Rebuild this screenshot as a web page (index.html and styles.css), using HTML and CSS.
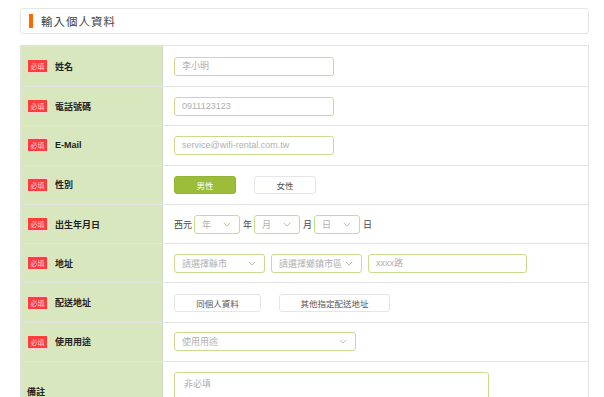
FILE: index.html
```html
<!DOCTYPE html>
<html lang="zh-Hant">
<head>
  <meta charset="UTF-8">
  <title>輸入個人資料</title>
  <link rel="stylesheet" href="styles.css">
</head>
<body>
<div class="page">
  <div class="title-box"><span class="title-mark"></span><h2>輸入個人資料</h2></div>

  <div class="form-table">
    <div class="row">
      <div class="label"><span class="must">必填</span>姓名</div>
      <div class="field"><input class="txt w160" placeholder="李小明"></div>
    </div>
    <div class="row">
      <div class="label"><span class="must">必填</span>電話號碼</div>
      <div class="field"><input class="txt w160" placeholder="0911123123"></div>
    </div>
    <div class="row">
      <div class="label"><span class="must">必填</span><b class="en">E-Mail</b></div>
      <div class="field"><input class="txt w160" placeholder="service@wifi-rental.com.tw"></div>
    </div>
    <div class="row">
      <div class="label"><span class="must">必填</span>性別</div>
      <div class="field">
        <span class="btn on">男性</span>
        <span class="btn gap18">女性</span>
      </div>
    </div>
    <div class="row">
      <div class="label"><span class="must">必填</span>出生年月日</div>
      <div class="field date">
        西元
        <span class="sel w46">年<svg viewBox="0 0 10 6"><path d="M1 1l4 4 4-4"/></svg></span>年
        <span class="sel w46">月<svg viewBox="0 0 10 6"><path d="M1 1l4 4 4-4"/></svg></span>月
        <span class="sel w46">日<svg viewBox="0 0 10 6"><path d="M1 1l4 4 4-4"/></svg></span>日
      </div>
    </div>
    <div class="row">
      <div class="label"><span class="must">必填</span>地址</div>
      <div class="field addr">
        <span class="sel w91">請選擇縣市<svg viewBox="0 0 10 6"><path d="M1 1l4 4 4-4"/></svg></span>
        <span class="sel w91">請選擇鄉鎮市區<svg viewBox="0 0 10 6"><path d="M1 1l4 4 4-4"/></svg></span>
        <input class="txt w159" placeholder="xxxx路">
      </div>
    </div>
    <div class="row">
      <div class="label"><span class="must">必填</span>配送地址</div>
      <div class="field">
        <span class="btn w86">同個人資料</span>
        <span class="btn w110 gap18">其他指定配送地址</span>
      </div>
    </div>
    <div class="row">
      <div class="label"><span class="must">必填</span>使用用途</div>
      <div class="field"><span class="sel w182">使用用途<svg viewBox="0 0 10 6"><path d="M1 1l4 4 4-4"/></svg></span></div>
    </div>
    <div class="row tall">
      <div class="label bottom">備註</div>
      <div class="field top"><textarea class="area" placeholder="非必填"></textarea></div>
    </div>
  </div>
</div>
</body>
</html>
```

FILE: styles.css
```css
body {
  margin: 0;
  background-color: #fff;
  font-family: "Liberation Sans", "Noto Sans CJK TC", sans-serif;
  font-size: 9px;
  color: #333;
  overflow: hidden;
}

.page {
  width: 569px;
  padding: 8px 0 0 20px;
}

.title-box {
  display: flex;
  align-items: center;
  height: 24px;
  border: 1px solid #e6e6e6;
  border-radius: 3px;
  padding-left: 8px;
}

.title-mark {
  width: 4px;
  height: 14px;
  background-color: #ff6a00;
  margin-right: 8px;
}

.title-box h2 {
  margin: 0;
  font-size: 11.5px;
  font-weight: normal;
  color: #444;
  letter-spacing: 1px;
}

.form-table {
  margin-top: 11px;
  border: 1px solid #e2e2e2;
  border-bottom: none;
}

.row {
  display: grid;
  grid-template-columns: 142px 1fr;
  height: 38.3px;
  border-bottom: 1px solid #e2e2e2;
}

.row:first-child {
  height: 40px;
}

.row.tall {
  height: 60px;
}

.label {
  display: flex;
  align-items: center;
  padding-left: 6px;
  background-color: #d9e7bf;
  border-right: 1px solid #d0d8c4;
  color: #222;
  font-weight: bold;
}

.label.bottom {
  align-items: flex-start;
  padding-top: 23px;
  padding-left: 6px;
}

.en {
  font-family: "Liberation Sans", sans-serif;
}

.must {
  display: inline-flex;
  align-items: center;
  justify-content: center;
  width: 19px;
  height: 12px;
  margin-right: 7px;
  background-color: #ff3b3b;
  border: 1px solid #fbd3d3;
  color: #ffd9d9;
  font-size: 7px;
  font-weight: normal;
}

.field {
  display: flex;
  align-items: center;
  padding-left: 11px;
  color: #444;
}

.field.top {
  align-items: flex-start;
  padding-top: 10px;
}

.txt {
  box-sizing: border-box;
  height: 19px;
  padding: 0 7px;
  border: 1px solid #c9db8f;
  border-radius: 3px;
  font-family: inherit;
  font-size: 9px;
  outline: none;
}

.txt::placeholder,
.area::placeholder {
  color: #b0b0b0;
}

.w160 {
  width: 160px;
}

.w159 {
  width: 159px;
}

.btn {
  box-sizing: border-box;
  display: inline-flex;
  align-items: center;
  justify-content: center;
  width: 62px;
  height: 18px;
  border: 1px solid #e4e4ea;
  border-radius: 3px;
  color: #555;
  font-size: 8.5px;
}

.btn.on {
  background-color: #9cbd3a;
  border-color: #93b333;
  color: #fff;
}

.btn.w86 {
  width: 87px;
}

.btn.w110 {
  width: 111px;
}

.gap18 {
  margin-left: 18px;
}

.sel {
  box-sizing: border-box;
  display: inline-flex;
  align-items: center;
  justify-content: space-between;
  height: 19px;
  padding: 0 8px 0 7px;
  border: 1px solid #c9db8f;
  border-radius: 3px;
  color: #b0b0b0;
}

.sel svg {
  width: 8px;
  height: 5px;
  fill: none;
  stroke: #aaa;
  stroke-width: 1;
}

.date {
  gap: 2px;
}

.date .sel {
  margin-right: 1px;
}

.addr {
  gap: 6px;
}

.w46 {
  width: 46px;
}

.w91 {
  width: 91px;
}

.w182 {
  width: 182px;
}

.area {
  box-sizing: border-box;
  width: 315px;
  height: 60px;
  padding: 4px 9px;
  border: 1px solid #c9db8f;
  border-radius: 3px;
  font-family: inherit;
  font-size: 9px;
  resize: none;
}
```
